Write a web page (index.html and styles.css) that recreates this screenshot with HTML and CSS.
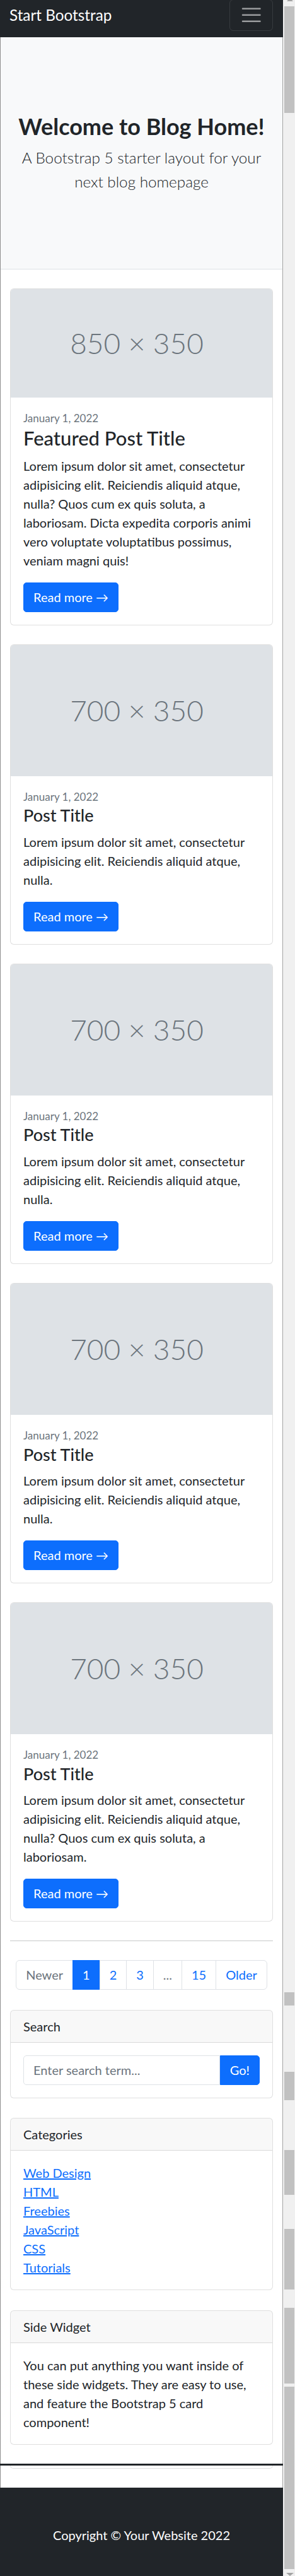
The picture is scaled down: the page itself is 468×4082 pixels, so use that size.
FILE: index.html
```html
<!DOCTYPE html>
<html lang="en">
<head>
<meta charset="utf-8">
<title>Blog Home - Start Bootstrap Template</title>
<link rel="stylesheet" href="styles.css">
</head>
<body>
<div class="screen">
  <div class="viewport">
    <nav class="navbar">
      <span class="brand">Start Bootstrap</span>
      <span class="toggler">
        <svg class="toggler-icon" viewBox="0 0 30 30"><path d="M4 7h22M4 15h22M4 23h22" stroke="rgba(255,255,255,0.55)" stroke-width="2" stroke-linecap="round" fill="none"/></svg>
      </span>
    </nav>

    <header class="hero">
      <h1 class="hero-title">Welcome to Blog Home!</h1>
      <p class="lead">A Bootstrap 5 starter layout for your next blog homepage</p>
    </header>

    <main class="main">
      <article class="card">
        <div class="card-img card-img-wide">850 × 350</div>
        <div class="card-body">
          <div class="date">January 1, 2022</div>
          <h2 class="card-title card-title-featured">Featured Post Title</h2>
          <p class="card-text">Lorem ipsum dolor sit amet, consectetur adipisicing elit. Reiciendis aliquid atque, nulla? Quos cum ex quis soluta, a laboriosam. Dicta expedita corporis animi vero voluptate voluptatibus possimus, veniam magni quis!</p>
          <a class="btn" href="#!">Read more →</a>
        </div>
      </article>

      <article class="card">
        <div class="card-img">700 × 350</div>
        <div class="card-body">
          <div class="date">January 1, 2022</div>
          <h2 class="card-title">Post Title</h2>
          <p class="card-text">Lorem ipsum dolor sit amet, consectetur adipisicing elit. Reiciendis aliquid atque, nulla.</p>
          <a class="btn" href="#!">Read more →</a>
        </div>
      </article>

      <article class="card">
        <div class="card-img">700 × 350</div>
        <div class="card-body">
          <div class="date">January 1, 2022</div>
          <h2 class="card-title">Post Title</h2>
          <p class="card-text">Lorem ipsum dolor sit amet, consectetur adipisicing elit. Reiciendis aliquid atque, nulla.</p>
          <a class="btn" href="#!">Read more →</a>
        </div>
      </article>

      <article class="card">
        <div class="card-img">700 × 350</div>
        <div class="card-body">
          <div class="date">January 1, 2022</div>
          <h2 class="card-title">Post Title</h2>
          <p class="card-text">Lorem ipsum dolor sit amet, consectetur adipisicing elit. Reiciendis aliquid atque, nulla.</p>
          <a class="btn" href="#!">Read more →</a>
        </div>
      </article>

      <article class="card">
        <div class="card-img">700 × 350</div>
        <div class="card-body">
          <div class="date">January 1, 2022</div>
          <h2 class="card-title">Post Title</h2>
          <p class="card-text">Lorem ipsum dolor sit amet, consectetur adipisicing elit. Reiciendis aliquid atque, nulla? Quos cum ex quis soluta, a laboriosam.</p>
          <a class="btn" href="#!">Read more →</a>
        </div>
      </article>

      <nav class="pager" aria-label="Pagination">
        <hr class="rule">
        <ul class="pagination">
          <li class="page-item disabled"><span class="page-link">Newer</span></li>
          <li class="page-item active"><span class="page-link">1</span></li>
          <li class="page-item"><a class="page-link" href="#!">2</a></li>
          <li class="page-item"><a class="page-link" href="#!">3</a></li>
          <li class="page-item disabled"><span class="page-link">...</span></li>
          <li class="page-item"><a class="page-link" href="#!">15</a></li>
          <li class="page-item"><a class="page-link" href="#!">Older</a></li>
        </ul>
      </nav>

      <section class="card widget">
        <div class="card-header">Search</div>
        <div class="card-body">
          <div class="input-group">
            <input class="form-control" type="text" placeholder="Enter search term...">
            <button class="btn btn-go" type="button">Go!</button>
          </div>
        </div>
      </section>

      <section class="card widget">
        <div class="card-header">Categories</div>
        <div class="card-body">
          <ul class="cat-list">
            <li><a href="#!">Web Design</a></li>
            <li><a href="#!">HTML</a></li>
            <li><a href="#!">Freebies</a></li>
            <li><a href="#!">JavaScript</a></li>
            <li><a href="#!">CSS</a></li>
            <li><a href="#!">Tutorials</a></li>
          </ul>
        </div>
      </section>

      <section class="card widget widget-last">
        <div class="card-header">Side Widget</div>
        <div class="card-body">You can put anything you want inside of these side widgets. They are easy to use, and feature the Bootstrap 5 card component!</div>
      </section>
    </main>

    <div class="stitch">
      <div class="stitch-bar"></div>
      <div class="stitch-card"></div>
    </div>

    <footer class="footer">
      <p class="footer-text">Copyright © Your Website 2022</p>
    </footer>
  </div>

  <div class="scrollbar">
    <span class="arrow-up"></span>
    <span class="thumb th1"></span>
    <span class="thumb th2"></span>
    <span class="thumb th3"></span>
    <span class="thumb th4"></span>
    <span class="thumb th5"></span>
    <span class="thumb th6"></span>
    <span class="thumb th7"></span>
    <span class="arrow-down"></span>
  </div>
</div>
</body>
</html>
```
FILE: styles.css
```css
* { box-sizing: border-box; }

html, body {
  margin: 0;
  padding: 0;
}

body {
  font-family: Lato, "Open Sans", sans-serif;
  font-size: 20px;
  line-height: 30px;
  color: #212529;
  background: #fff;
  overflow: hidden;
}

.screen {
  display: flex;
  width: 468px;
  height: 4082px;
  overflow: hidden;
}

.viewport {
  flex: none;
  width: 449px;
  border-left: 1px solid #8e8e8e;
  border-right: 1px solid #a4a4a4;
  display: flex;
  flex-direction: column;
}

/* navbar */
.navbar {
  flex: none;
  margin: 0 -1px;
  height: 59px;
  background: #212529;
  display: flex;
  justify-content: space-between;
  align-items: flex-start;
  padding: 0 16px 0 15px;
  overflow: hidden;
}

.brand {
  color: #fff;
  font-size: 24.3px;
  line-height: 37.5px;
  margin-top: 5px;
}

.toggler {
  margin-top: -1px;
  width: 69px;
  height: 50px;
  border: 1px solid rgba(255, 255, 255, 0.1);
  border-radius: 6px;
  display: flex;
  align-items: center;
  justify-content: center;
}

.toggler-icon {
  display: block;
  width: 37.5px;
  height: 37.5px;
}

/* hero */
.hero {
  flex: none;
  background: #f8f9fa;
  border-bottom: 1px solid #dee2e6;
  padding: 120px 15px;
  text-align: center;
}

.hero-title {
  margin: 0 0 10px;
  font-size: 36px;
  line-height: 42px;
  font-weight: 700;
}

.lead {
  margin: 0;
  font-size: 24.3px;
  line-height: 37.5px;
  font-weight: 300;
}

/* main */
.main {
  flex: none;
  padding: 30px 15px 0;
}

.card {
  background: #fff;
  border: 1px solid rgba(0, 0, 0, 0.125);
  border-radius: 6px;
  margin-bottom: 30px;
  overflow: hidden;
}

.card-img {
  height: 208.5px;
  background: #dee2e6;
  color: #6c757d;
  display: flex;
  align-items: center;
  justify-content: center;
  padding-right: 15px;
  font-size: 46px;
  font-weight: 300;
  line-height: 1;
}

.card-img-wide {
  height: 171.5px;
}

.card-body {
  padding: 20px;
}

.date {
  font-size: 17px;
  line-height: 26.25px;
  color: #6c757d;
}

.card-title {
  margin: 0 0 10px;
  font-size: 27px;
  line-height: 32.3px;
  font-weight: 500;
}

.card-title-featured {
  font-size: 31px;
  line-height: 36.9px;
}

.card-text {
  margin: 0 0 20px;
}

.btn {
  display: inline-block;
  background: #0d6efd;
  border: 1px solid #0d6efd;
  color: #fff;
  padding: 7.5px 15px;
  border-radius: 5px;
  font-family: inherit;
  font-size: 20px;
  line-height: 30px;
  text-decoration: none;
}

/* pagination */
.rule {
  margin: 0;
  border: 0;
  border-top: 1px solid rgba(33, 37, 41, 0.25);
}

.pagination {
  list-style: none;
  margin: 30px 0 32px;
  padding: 0;
  display: flex;
  justify-content: center;
}

.page-link {
  display: block;
  padding: 7.5px 15px;
  margin-left: -1px;
  border: 1px solid #dee2e6;
  background: #fff;
  color: #0d6efd;
  text-decoration: none;
  line-height: 30px;
}

.page-item:first-child .page-link {
  margin-left: 0;
  border-radius: 6px 0 0 6px;
}

.page-item:last-child .page-link {
  border-radius: 0 6px 6px 0;
}

.disabled .page-link {
  color: #6c757d;
}

.active .page-link {
  background: #0d6efd;
  border-color: #0d6efd;
  color: #fff;
}

/* sidebar widgets */
.widget {
  margin-bottom: 31.5px;
}

.widget-last {
  margin-bottom: 30.5px;
}

.card-header {
  padding: 10px 20px;
  background: rgba(33, 37, 41, 0.03);
  border-bottom: 1px solid rgba(0, 0, 0, 0.125);
}

.input-group {
  display: flex;
}

.form-control {
  flex: 1;
  min-width: 0;
  height: 47px;
  padding: 7.5px 15px;
  font-family: inherit;
  font-size: 20px;
  line-height: 30px;
  color: #212529;
  background: #fff;
  border: 1px solid #dee2e6;
  border-radius: 5px 0 0 5px;
}

.form-control::placeholder {
  color: #6c757d;
  opacity: 1;
}

.btn-go {
  border-radius: 0 5px 5px 0;
  height: 47px;
}

.cat-list {
  list-style: none;
  margin: 0;
  padding: 0;
}

.cat-list a {
  color: #0d6efd;
  text-decoration: underline;
}

/* stitched-capture artifact */
.stitch {
  flex: none;
  margin: 0 -1px;
  padding-bottom: 30px;
}

.stitch-bar {
  height: 3px;
  background: #212529;
}

.stitch-card {
  height: 4.5px;
  margin: 0 16px;
  border: 1px solid rgba(0, 0, 0, 0.125);
  border-top: 0;
  border-radius: 0 0 6px 6px;
}

/* footer */
.footer {
  flex: 1;
  margin: 0 -1px;
  background: #212529;
  padding-top: 60px;
}

.footer-text {
  margin: 0;
  color: #fff;
  text-align: center;
}

/* window scrollbar */
.scrollbar {
  flex: none;
  width: 19px;
  background: #f0f0f0;
  padding-left: 2px;
  display: flex;
  flex-direction: column;
}

.arrow-up {
  align-self: flex-start;
  margin: -3px 0 0 4px;
  width: 0;
  height: 0;
  border-left: 5px solid transparent;
  border-right: 5px solid transparent;
  border-bottom: 5px solid #a3a3a3;
}

.arrow-down {
  align-self: flex-start;
  margin: 5.7px 0 0 3px;
  width: 0;
  height: 0;
  border-left: 6px solid transparent;
  border-right: 6px solid transparent;
  border-top: 5px solid #a3a3a3;
}

.thumb {
  flex: none;
  width: 16px;
  background: #c1c1c1;
}

.th1 { margin-top: 8px; height: 169px; }
.th2 { margin-top: 2978px; height: 20.5px; }
.th3 { margin-top: 105px; height: 45px; }
.th4 { margin-top: 79.2px; height: 71px; }
.th5 { margin-top: 54px; height: 96px; }
.th6 { margin-top: 29px; height: 120.6px; }
.th7 { margin-top: 4.4px; height: 289.3px; }
```
